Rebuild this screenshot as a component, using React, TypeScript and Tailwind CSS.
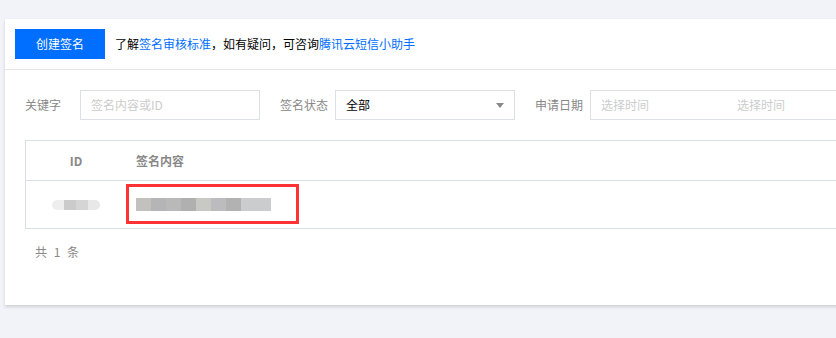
import React from 'react';

const blurContent = ['#c2c1bd', '#b5b5b7', '#b9b9b9', '#b0b0b0', '#c8c9c4', '#bcbcbe', '#b2b2b2', '#cbcccd', '#cbcccd'];
const blurId = ['#eeeeee', '#cbcbcb', '#d4d5d4', '#e8e8e8'];

export default function App() {
  return (
    <div
      className="w-[836px] h-[338px] overflow-hidden bg-[#f2f3f8] pl-[5px] pt-[19px] text-[12px]"
      style={{ fontFamily: '"Noto Sans CJK SC", "Noto Sans", sans-serif' }}
    >
      <div className="w-[900px] h-[286px] bg-white shadow-[0_2px_3px_rgba(0,0,0,0.15)]">
        {/* toolbar */}
        <div className="flex items-center h-[51px] px-[10px] border-b border-[#e5e5e5]">
          <button className="w-[90px] h-[30px] bg-[#006eff] text-white text-[12px]">创建签名</button>
          <p className="ml-[10px] text-[#000]">
            了解<span className="text-[#006eff]">签名审核标准</span>，如有疑问，可咨询
            <span className="text-[#006eff]">腾讯云短信小助手</span>
          </p>
        </div>

        <div className="px-[20px]">
          {/* filters */}
          <div className="flex items-center mt-[20px] h-[30px]">
            <label className="shrink-0 w-[55px] text-[#888]">关键字</label>
            <div className="shrink-0 w-[180px] h-[30px] border border-[#dcdfe6] flex items-center px-[10px] text-[#cccccc]">
              签名内容或ID
            </div>
            <label className="shrink-0 ml-[20px] w-[55px] text-[#888]">签名状态</label>
            <div className="shrink-0 w-[180px] h-[30px] border border-[#dcdfe6] flex items-center justify-between pl-[10px] pr-[10px] text-[#000]">
              <span>全部</span>
              <span className="w-0 h-0 border-l-[4px] border-r-[4px] border-t-[5px] border-l-transparent border-r-transparent border-t-[#888]" />
            </div>
            <label className="shrink-0 ml-[20px] w-[55px] text-[#888]">申请日期</label>
            <div className="shrink-0 w-[300px] h-[30px] border border-[#dcdfe6] flex items-center pl-[10px] text-[#cccccc]">
              <span className="w-[136px]">选择时间</span>
              <span>选择时间</span>
            </div>
          </div>

          {/* table */}
          <div className="mt-[20px] border border-[#d9dde5] border-r-0">
            <div className="flex h-[40px] items-center border-b border-[#d9dde5] text-[#888] font-semibold">
              <div className="w-[100px] text-center">ID</div>
              <div className="pl-[10px]">签名内容</div>
            </div>
            <div className="flex h-[47px] items-center">
              <div className="w-[100px] flex justify-center">
                <div className="flex h-[10px] rounded-full overflow-hidden">
                  {blurId.map((c, i) => (
                    <div key={i} className="w-[12px] h-full" style={{ background: c }} />
                  ))}
                </div>
              </div>
              <div className="relative pl-[10px]">
                <div className="flex h-[13px]">
                  {blurContent.map((c, i) => (
                    <div key={i} className="w-[15px] h-full" style={{ background: c }} />
                  ))}
                </div>
                <div className="absolute left-0 top-[-14px] w-[173px] h-[40px] border-[3px] border-[#f33]" />
              </div>
            </div>
          </div>

          <div className="mt-[14px] pl-[10px] text-[#888] tracking-[2px]">共 1 条</div>
        </div>
      </div>
    </div>
  );
}
